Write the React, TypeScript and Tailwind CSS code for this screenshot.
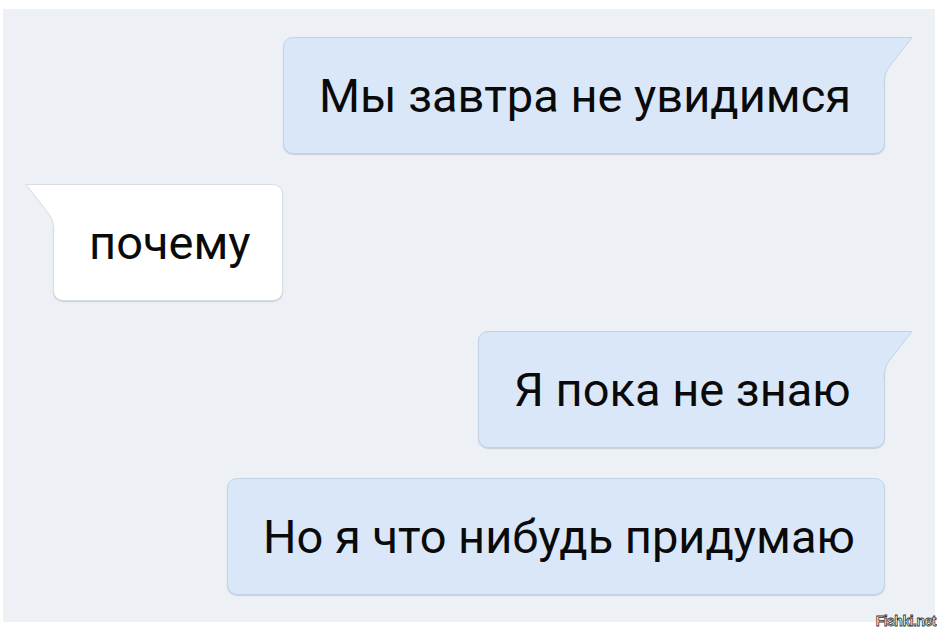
import React from "react";

function TailRight({ fill, stroke }: { fill: string; stroke: string }) {
  return (
    <svg
      className="absolute top-[-1px] left-[calc(100%-2px)]"
      width="31"
      height="48"
      viewBox="0 0 31 48"
    >
      <path d="M0 0.5 H30 L7 30 Q2 37 2 48 H0 Z" fill={fill} />
      <path d="M0 0.5 H30 L7 30 Q2 37 2 48" fill="none" stroke={stroke} strokeWidth="1" />
    </svg>
  );
}

function TailLeft({ fill, stroke }: { fill: string; stroke: string }) {
  return (
    <svg
      className="absolute top-[-1px] right-[calc(100%-2px)]"
      width="31"
      height="48"
      viewBox="0 0 31 48"
    >
      <path d="M31 0.5 H1 L24 30 Q29 37 29 48 H31 Z" fill={fill} />
      <path d="M31 0.5 H1 L24 30 Q29 37 29 48" fill="none" stroke={stroke} strokeWidth="1" />
    </svg>
  );
}

function Bubble({
  text,
  side,
  width,
  tail,
}: {
  text: string;
  side: "left" | "right";
  width: string;
  tail: boolean;
}) {
  const isRight = side === "right";
  const fill = isRight ? "#d9e7f8" : "#ffffff";
  const stroke = isRight ? "#c3d2e4" : "#d6dde5";
  return (
    <div className={isRight ? "flex justify-end" : "flex justify-start"}>
      <div
        className={
          (isRight
            ? "bg-[#d9e7f8] border-[#c3d2e4] "
            : "bg-white border-[#d6dde5] ") +
          width +
          " relative h-[117px] flex items-center pl-[35px] border rounded-[10px] shadow-[0_1px_1px_rgba(90,110,140,0.25)] " +
          (tail ? (isRight ? "rounded-tr-none" : "rounded-tl-none") : "")
        }
      >
        {tail && isRight && <TailRight fill={fill} stroke={stroke} />}
        {tail && !isRight && <TailLeft fill={fill} stroke={stroke} />}
        <span className="text-[47px] leading-none text-[#0a0a0a] font-['Roboto',sans-serif] whitespace-nowrap">
          {text}
        </span>
      </div>
    </div>
  );
}

export default function App() {
  return (
    <div className="relative w-[940px] h-[635px] bg-white overflow-hidden">
      <div className="ml-[3px] mt-[9px] w-[932px] h-[613px] bg-[#edf0f4] flex flex-col gap-[30px] pt-[28px] pl-[50px] pr-[50px]">
        <Bubble text="Мы завтра не увидимся" side="right" width="w-[602px]" tail />
        <Bubble text="почему" side="left" width="w-[230px]" tail />
        <Bubble text="Я пока не знаю" side="right" width="w-[407px]" tail />
        <Bubble text="Но я что нибудь придумаю" side="right" width="w-[658px]" tail={false} />
      </div>
      <div className="absolute right-[4px] top-[614px] text-[14px] leading-none font-bold text-white font-['Liberation_Sans_Narrow','Liberation_Sans',sans-serif] tracking-[-0.5px] [-webkit-text-stroke:0.8px_#333]">
        Fishki.net
      </div>
    </div>
  );
}
